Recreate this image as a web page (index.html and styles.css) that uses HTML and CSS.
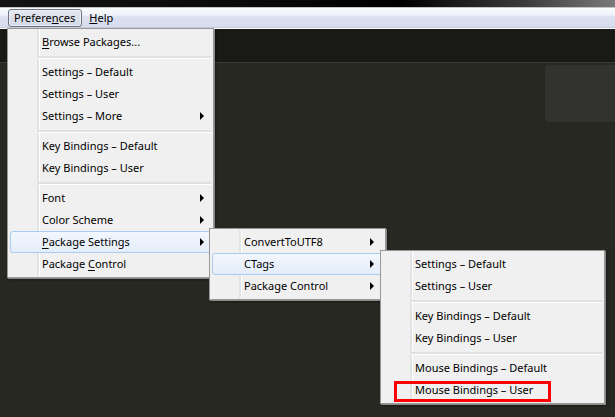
FILE: index.html
```html
<!DOCTYPE html>
<html>
<head>
<meta charset="utf-8">
<link rel="stylesheet" href="styles.css">
</head>
<body>
<div class="titlebar"></div>
<div class="menubar">
  <span class="mb-item active">Prefere<u>n</u>ces</span>
  <span class="mb-item"><u>H</u>elp</span>
</div>
<div class="toolbar"></div>
<div class="editor"><div class="minimap"></div></div>

<div class="menu main">
  <div class="mi"><u>B</u>rowse Packages...</div>
  <div class="sep"></div>
  <div class="mi">Settings – Default</div>
  <div class="mi">Settings – User</div>
  <div class="mi">Settings – More<span class="arrow"></span></div>
  <div class="sep"></div>
  <div class="mi">Key Bindings – Default</div>
  <div class="mi">Key Bindings – User</div>
  <div class="sep"></div>
  <div class="mi">Font<span class="arrow"></span></div>
  <div class="mi">Color Scheme<span class="arrow"></span></div>
  <div class="mi hl"><u>P</u>ackage Settings<span class="arrow"></span></div>
  <div class="mi">Package <u>C</u>ontrol</div>
</div>

<div class="menu sub1">
  <div class="mi">ConvertToUTF8<span class="arrow"></span></div>
  <div class="mi hl">CTags<span class="arrow"></span></div>
  <div class="mi">Package Control<span class="arrow"></span></div>
</div>

<div class="menu sub2">
  <div class="mi">Settings – Default</div>
  <div class="mi">Settings – User</div>
  <div class="sep"></div>
  <div class="mi">Key Bindings – Default</div>
  <div class="mi">Key Bindings – User</div>
  <div class="sep"></div>
  <div class="mi">Mouse Bindings – Default</div>
  <div class="mi">Mouse Bindings – User</div>
</div>

<div class="annot"></div>
</body>
</html>
```

FILE: styles.css
```css
* { box-sizing: border-box; }
html, body { margin: 0; padding: 0; }
body {
  width: 615px;
  height: 417px;
  overflow: hidden;
  background: #272822;
  font-family: "Noto Sans", "Open Sans", sans-serif;
  font-size: 11px;
  color: #000;
  position: relative;
}
.titlebar {
  height: 7px;
  background: linear-gradient(90deg, #141414 0%, #0a0a0a 40%, #000 65%, #3a3a3a 85%, #7a7a7a 100%);
}
.menubar {
  height: 22px;
  border-top: 1px solid #c4c4c4;
  border-bottom: 1px solid #fff;
  background: linear-gradient(#fbfcfe 0%, #eef1f8 35%, #dbe0ef 45%, #d7dcee 95%, #b9bcc6 100%);
  display: flex;
  align-items: center;
  padding-left: 8px;
  gap: 1px;
}
.mb-item {
  height: 18px;
  line-height: 16px;
  padding: 0 6px 0 5px;
  border: 1px solid transparent;
  border-radius: 3px;
}
.mb-item.active {
  border-color: #6b7480;
  background: linear-gradient(#e4e8f0, #d2d8e4);
  box-shadow: inset 0 0 0 1px rgba(255,255,255,.5);
}
.toolbar {
  height: 34px;
  background: #191a16;
  border-bottom: 1px solid #3a3a36;
}
.editor {
  position: relative;
  height: 353px;
}
.minimap {
  position: absolute;
  left: 545px;
  top: 2px;
  width: 80px;
  height: 57px;
  background: #32332e;
  border-radius: 3px;
}
.menu {
  position: absolute;
  background: #f0f0f0;
  border: 1px solid #979797;
  padding: 2px;
  box-shadow: 1px 1px 0 #8a8a8a, 2px 2px 2px rgba(0,0,0,.35);
}
.menu::before {
  content: "";
  position: absolute;
  left: 29px;
  top: 1px;
  bottom: 1px;
  width: 2px;
  background: #e2e3e3;
  border-right: 1px solid #fff;
}
.main { left: 7px; top: 28px; width: 207px; }
.sub1 { left: 209px; top: 228px; width: 177px; }
.sub2 { left: 380px; top: 250px; width: 225px; }
.mi {
  position: relative;
  height: 22px;
  line-height: 20px;
  padding-left: 31px;
  border: 1px solid transparent;
  border-radius: 3px;
  white-space: nowrap;
}
.mi.hl {
  border-color: #aacbf2;
  background: linear-gradient(#f3f7fd, #e4edfa);
}
.mi u { text-decoration-thickness: 1px; text-underline-offset: 2px; }
.arrow {
  position: absolute;
  right: 6px;
  top: 6px;
  width: 0;
  height: 0;
  border-left: 4px solid #000;
  border-top: 4px solid transparent;
  border-bottom: 4px solid transparent;
}
.sub1 .arrow { right: 8px; }
.sep {
  position: relative;
  height: 8px;
}
.sep::after {
  content: "";
  position: absolute;
  left: 28px;
  right: 0;
  top: 3px;
  height: 2px;
  background: #e0e0e0;
  border-bottom: 1px solid #fff;
}
.annot {
  position: absolute;
  left: 394px;
  top: 381px;
  width: 157px;
  height: 21px;
  border: 3px solid #f00;
}
```
